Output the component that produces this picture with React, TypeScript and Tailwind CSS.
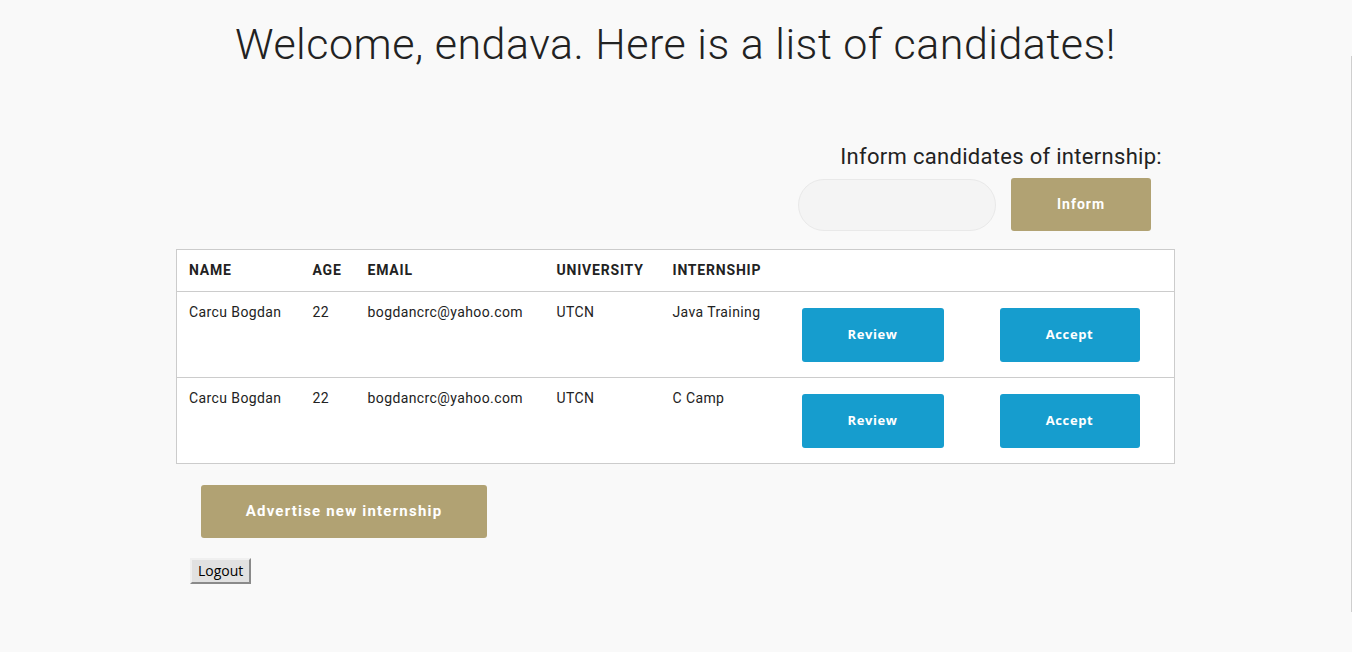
import React from 'react';

const candidates = [
  { name: 'Carcu Bogdan', age: 22, email: 'bogdancrc@yahoo.com', university: 'UTCN', internship: 'Java Training' },
  { name: 'Carcu Bogdan', age: 22, email: 'bogdancrc@yahoo.com', university: 'UTCN', internship: 'C Camp' },
];

export default function App() {
  return (
    <div className="flex min-h-[652px] bg-[#f9f9f9] text-[#222] font-['Roboto',sans-serif]">
      <div className="flex-1">
        <h1 className="pt-[18px] text-center text-[43px] font-light leading-[52px] tracking-[0.5px]">
          Welcome, endava. Here is a list of candidates!
        </h1>

        <div className="ml-[176px] w-[999px] mt-[73px]">
          {/* Inform */}
          <div className="flex flex-col items-end pr-[13px]">
            <p className="text-[22px] leading-[28px] tracking-[0.3px]">Inform candidates of internship:</p>
            <div className="mt-[7px] flex items-center gap-[15px] pr-[11px]">
              <input className="h-[52px] w-[198px] rounded-full border border-[#e9e9e9] bg-[#f4f4f4] px-4 outline-none" />
              <button className="h-[53px] w-[140px] rounded-[3px] bg-[#b1a273] text-[14px] font-bold tracking-[1px] text-white">
                Inform
              </button>
            </div>
          </div>

          {/* Table */}
          <table className="mt-[18px] w-full border-collapse border border-[#cccccc] bg-white text-left text-[14px] tracking-[0.4px]">
            <thead>
              <tr className="h-[42px] border-b border-[#cccccc] tracking-[0.8px]">
                <th className="w-[124px] pl-[12px] font-bold uppercase">Name</th>
                <th className="w-[55px] pl-[12px] font-bold uppercase">Age</th>
                <th className="w-[189px] pl-[12px] font-bold uppercase">Email</th>
                <th className="w-[116px] pl-[12px] font-bold uppercase">University</th>
                <th className="w-[129px] pl-[12px] font-bold uppercase">Internship</th>
                <th className="w-[198px]"></th>
                <th></th>
              </tr>
            </thead>
            <tbody>
              {candidates.map((c, i) => (
                <tr key={i} className="h-[86px] border-b border-[#cccccc] align-top">
                  <td className="pl-[12px] pt-[10px]">{c.name}</td>
                  <td className="pl-[12px] pt-[10px]">{c.age}</td>
                  <td className="pl-[12px] pt-[10px]">{c.email}</td>
                  <td className="pl-[12px] pt-[10px]">{c.university}</td>
                  <td className="pl-[12px] pt-[10px]">{c.internship}</td>
                  <td className="pl-[12px] pt-[16px]">
                    <button className="h-[54px] w-[142px] rounded-[3px] bg-[#169dce] font-['Open_Sans',sans-serif] text-[13px] font-bold tracking-[0.6px] text-white">
                      Review
                    </button>
                  </td>
                  <td className="pl-[12px] pt-[16px]">
                    <button className="h-[54px] w-[140px] rounded-[3px] bg-[#169dce] font-['Open_Sans',sans-serif] text-[13px] font-bold tracking-[0.6px] text-white">
                      Accept
                    </button>
                  </td>
                </tr>
              ))}
            </tbody>
          </table>

          <button className="ml-[25px] mt-[21px] block h-[53px] w-[286px] rounded-[3px] bg-[#b1a273] text-[15px] font-bold tracking-[1.2px] text-white">
            Advertise new internship
          </button>

          <button className="ml-[14px] mt-[20px] block h-[26px] border-2 border-t-[#f0f0f0] border-l-[#f0f0f0] border-r-[#8a8a8a] border-b-[#8a8a8a] bg-[#e1e1e1] px-[6px] font-['Open_Sans',sans-serif] text-[14px] leading-none text-black">
            Logout
          </button>
        </div>
      </div>
      {/* thin scroll edge at the right */}
      <div className="mt-[56px] h-[556px] w-px bg-[#cfcfcf]"></div>
    </div>
  );
}
